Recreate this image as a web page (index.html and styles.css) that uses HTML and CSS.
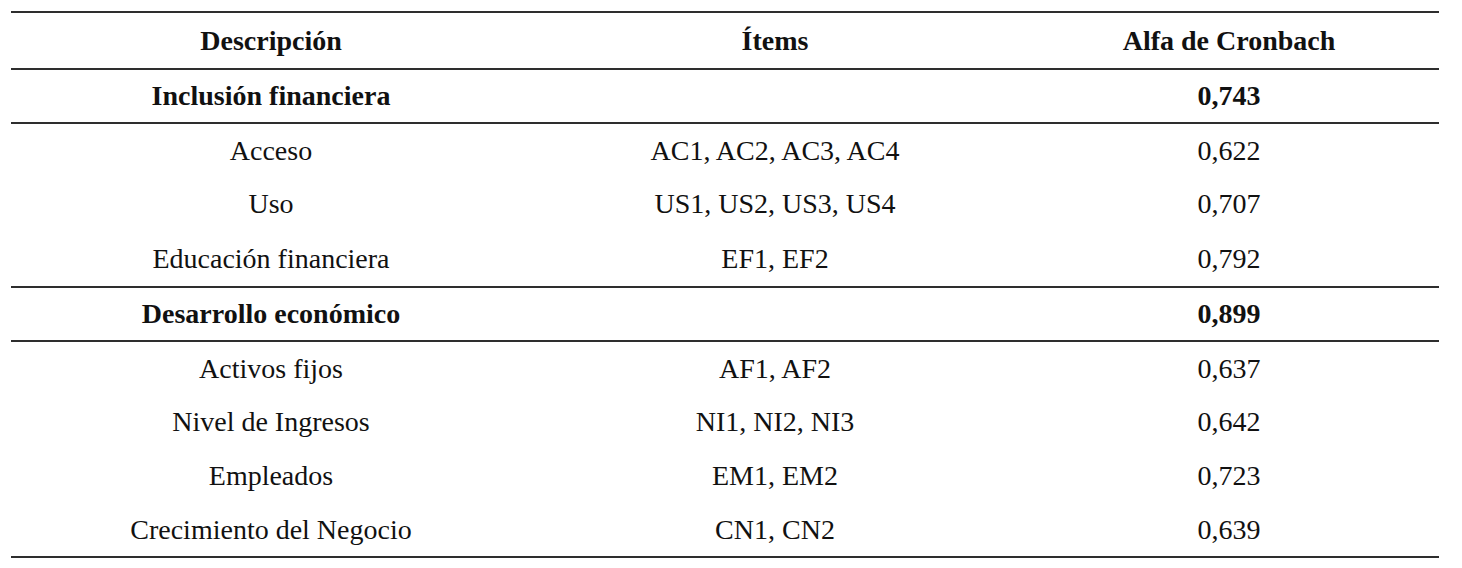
FILE: index.html
```html
<!DOCTYPE html>
<html lang="es">
<head>
<meta charset="utf-8">
<title>Alfa de Cronbach</title>
<link rel="stylesheet" href="styles.css">
</head>
<body>
<table class="rel">
  <colgroup>
    <col class="c1">
    <col class="c2">
    <col class="c3">
  </colgroup>
  <thead>
    <tr class="head">
      <th>Descripción</th>
      <th>Ítems</th>
      <th>Alfa de Cronbach</th>
    </tr>
  </thead>
  <tbody>
    <tr class="section">
      <td>Inclusión financiera</td>
      <td></td>
      <td>0,743</td>
    </tr>
    <tr class="item">
      <td>Acceso</td>
      <td>AC1, AC2, AC3, AC4</td>
      <td>0,622</td>
    </tr>
    <tr class="item">
      <td>Uso</td>
      <td>US1, US2, US3, US4</td>
      <td>0,707</td>
    </tr>
    <tr class="item last tall">
      <td>Educación financiera</td>
      <td>EF1, EF2</td>
      <td>0,792</td>
    </tr>
    <tr class="section">
      <td>Desarrollo económico</td>
      <td></td>
      <td>0,899</td>
    </tr>
    <tr class="item">
      <td>Activos fijos</td>
      <td>AF1, AF2</td>
      <td>0,637</td>
    </tr>
    <tr class="item">
      <td>Nivel de Ingresos</td>
      <td>NI1, NI2, NI3</td>
      <td>0,642</td>
    </tr>
    <tr class="item">
      <td>Empleados</td>
      <td>EM1, EM2</td>
      <td>0,723</td>
    </tr>
    <tr class="item last">
      <td>Crecimiento del Negocio</td>
      <td>CN1, CN2</td>
      <td>0,639</td>
    </tr>
  </tbody>
</table>
</body>
</html>
```
FILE: styles.css
```css
html, body {
  margin: 0;
  padding: 0;
  background: #ffffff;
}

body {
  padding: 11px 0 0 11px;
  font-family: "Liberation Serif", serif;
  font-size: 28px;
  color: #111111;
}

.rel {
  border-collapse: collapse;
  table-layout: fixed;
  width: 1428px;
}

.c1 { width: 520px; }
.c2 { width: 488px; }
.c3 { width: 420px; }

.rel th,
.rel td {
  padding: 0;
  text-align: center;
  vertical-align: middle;
  white-space: nowrap;
}

.rel th {
  font-weight: bold;
}

.head {
  height: 57px;
  border-top: 2px solid #2e2e2e;
  border-bottom: 2px solid #2e2e2e;
}

.section {
  height: 54px;
  font-weight: bold;
  border-bottom: 2px solid #2e2e2e;
}

.item {
  height: 54px;
  font-weight: normal;
}

.item.last {
  border-bottom: 2px solid #2e2e2e;
}

.item.tall {
  height: 56px;
}
```
